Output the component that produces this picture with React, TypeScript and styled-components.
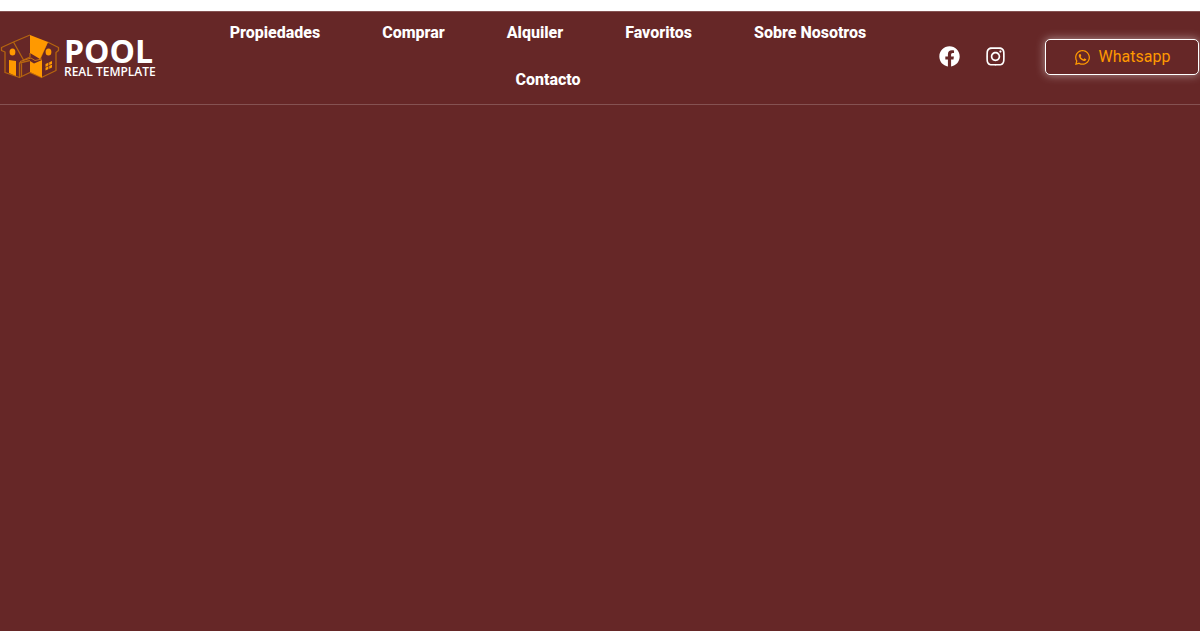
import React from "react";
import styled, { createGlobalStyle } from "styled-components";
import { FaFacebook, FaInstagram, FaWhatsapp } from "react-icons/fa";

const GlobalStyle = createGlobalStyle`
  *, *::before, *::after { box-sizing: border-box; }
  body {
    margin: 0;
    background: #ffffff;
    font-family: Roboto, "Liberation Sans", sans-serif;
  }
`;

const Page = styled.div`
  display: flex;
  flex-direction: column;
  min-height: 100vh;
  padding-top: 11px;
  overflow-x: hidden;
`;

const Header = styled.header`
  display: flex;
  align-items: center;
  background: #662727;
  border-top: 1px solid #855252;
  border-bottom: 1px solid #855252;
`;

const Hero = styled.main`
  flex: 1;
  background: #662727;
`;

const Brand = styled.a`
  display: flex;
  align-items: center;
  gap: 4px;
  width: 180px;
  padding-bottom: 4px;
  flex-shrink: 0;
  color: #ffffff;
  text-decoration: none;
  font-family: "Open Sans", "Noto Sans", sans-serif;
`;

const BrandText = styled.span`
  display: flex;
  flex-direction: column;
  gap: 3px;
  padding-top: 5px;
  white-space: nowrap;
`;

const BrandName = styled.span`
  font-size: 32px;
  font-weight: 700;
  line-height: 24px;
`;

const BrandTagline = styled.span`
  font-size: 12px;
  font-weight: 600;
  line-height: 12px;
`;

const Nav = styled.nav`
  flex: 1;
  padding-right: 23px;
`;

const NavList = styled.ul`
  display: flex;
  flex-wrap: wrap;
  justify-content: center;
  gap: 3px 62px;
  margin: 0;
  padding: 0 0 1px;
  list-style: none;
`;

const NavLink = styled.a`
  display: block;
  padding: 10px 0 13px;
  color: #ffffff;
  font-size: 16px;
  font-weight: 800;
  line-height: 21px;
  text-decoration: none;
  white-space: nowrap;
`;

const Socials = styled.div`
  display: flex;
  align-items: center;
  gap: 25px;
  margin-right: 39px;
  padding-bottom: 3px;
`;

const SocialLink = styled.a`
  display: flex;
  color: #ffffff;
  font-size: 21px;
`;

const WhatsappButton = styled.button`
  display: flex;
  align-items: center;
  justify-content: center;
  gap: 8px;
  width: 154px;
  height: 36px;
  margin: 0 1px 2px 0;
  padding: 0;
  flex-shrink: 0;
  border: 1px solid #ffffff;
  border-radius: 5px;
  background: #662727;
  box-shadow: 0 0 10px rgba(255, 255, 255, 0.5);
  color: #ff9900;
  font-family: inherit;
  font-size: 16px;
  line-height: 16px;

  svg {
    width: 17px;
    height: 17px;
  }
`;

const links = ["Propiedades", "Comprar", "Alquiler", "Favoritos", "Sobre Nosotros", "Contacto"];

function HousesLogo() {
  return (
    <svg width="60" height="46" viewBox="0 0 60 46" fill="none" aria-hidden="true">
      <g stroke="#b5640f" strokeWidth="1.3" strokeLinejoin="round">
        <path d="M30 2 13.5 9 1.5 14.500V17.500L5 19V39.500L19.500 44.500 30 39.500 41.500 44.500 56 37.500V19.500L58.500 17.500V14.500L47.500 9" />
        <path d="M13.500 9 23.500 27 30 24V20M40 26 47.500 9M19.500 44V30L30 27.500M21.500 43V30.500" />
      </g>
      <path d="M30 2 48 9 40 26 30 20Z" fill="#ff9900" />
      <path d="M9 27 16 28V43L9 40ZM30 28 34 30.500 42 27V44.500L30 39Z" fill="#ff9900" />
      <path d="M20 28.500 31 25 35 27.500 42 26" stroke="#c97312" />
      <ellipse cx="12.500" cy="19" rx="2.900" ry="3.500" fill="#ff9900" />
      <ellipse cx="48.500" cy="19" rx="2.900" ry="3.500" fill="#ff9900" />
      <path d="M45.500 31 52 28V34.500L45.500 37.500Z" fill="#ff9900" />
      <path d="M48.750 29V37M45 34.500 52.500 31" stroke="#662727" strokeWidth="0.8" />
    </svg>
  );
}

export default function App() {
  return (
    <>
      <GlobalStyle />
      <Page>
        <Header>
          <Brand href="#" aria-label="Pool Real Template">
            <HousesLogo />
            <BrandText>
              <BrandName>POOL</BrandName>
              <BrandTagline>REAL TEMPLATE</BrandTagline>
            </BrandText>
          </Brand>
          <Nav>
            <NavList>
              {links.map((label) => (
                <li key={label}>
                  <NavLink href="#">{label}</NavLink>
                </li>
              ))}
            </NavList>
          </Nav>
          <Socials>
            <SocialLink href="#" aria-label="Facebook">
              <FaFacebook />
            </SocialLink>
            <SocialLink href="#" aria-label="Instagram">
              <FaInstagram />
            </SocialLink>
          </Socials>
          <WhatsappButton type="button">
            <FaWhatsapp />
            Whatsapp
          </WhatsappButton>
        </Header>
        <Hero />
      </Page>
    </>
  );
}
